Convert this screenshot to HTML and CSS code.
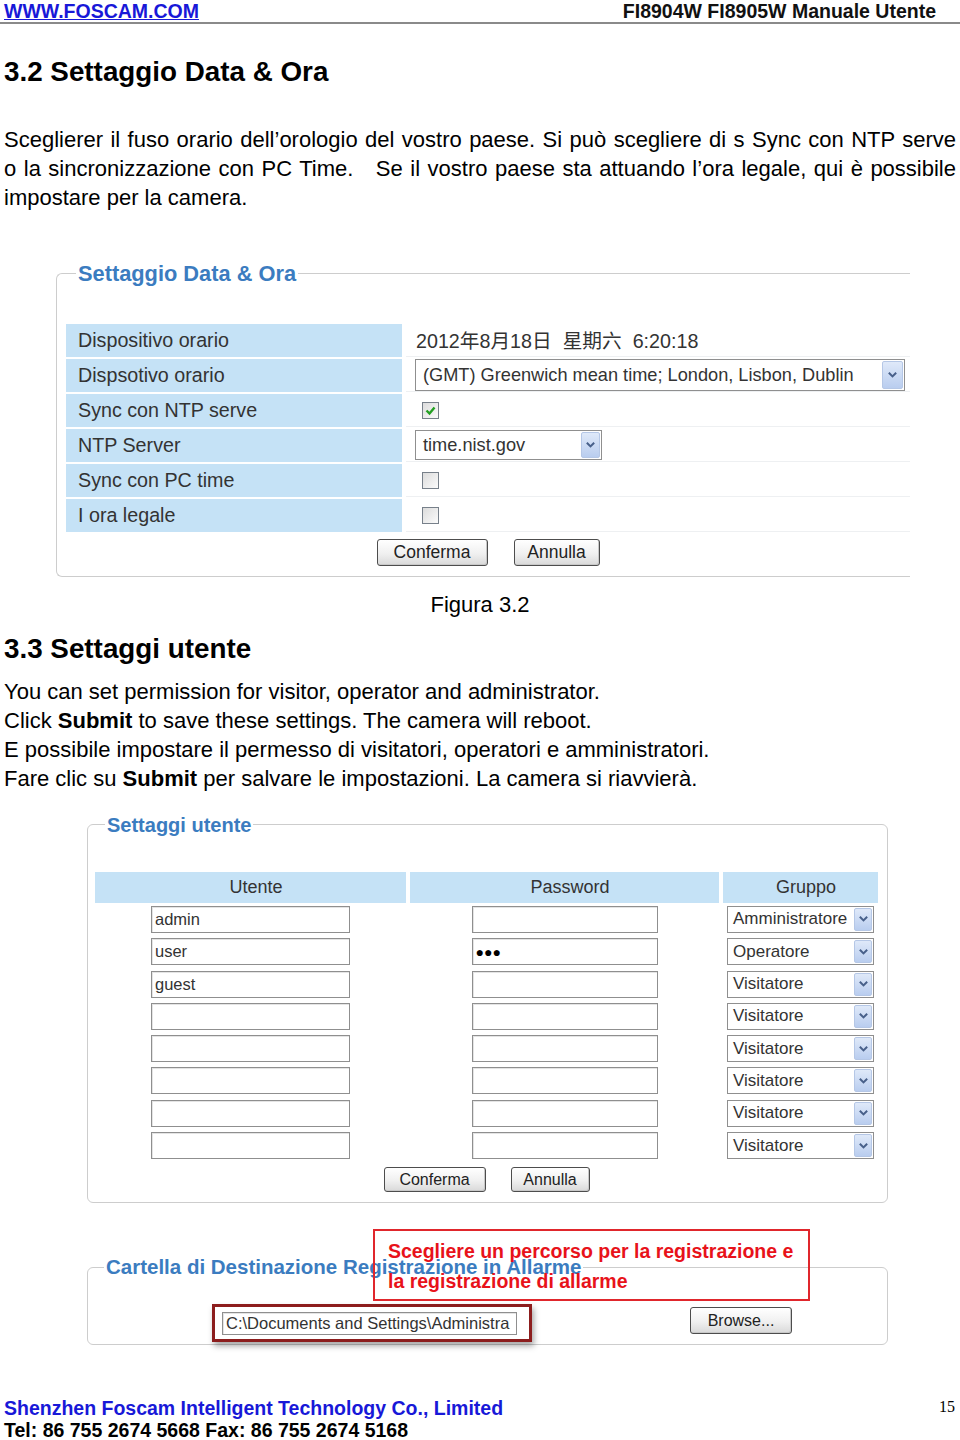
FILE: index.html
```html
<!DOCTYPE html>
<html lang="it">
<head>
<meta charset="utf-8">
<title>FI8904W FI8905W Manuale Utente</title>
<link rel="stylesheet" href="styles.css">
</head>
<body>
<header class="page-head">
  <a class="site" href="#">WWW.FOSCAM.COM</a>
  <span class="doc">FI8904W FI8905W Manuale Utente</span>
</header>
<main class="page">
  <h2 class="sec sec-1">3.2 Settaggio Data &amp; Ora</h2>
  <div class="para para-1">
    <span class="jl">Sceglierer il fuso orario dell’orologio del vostro paese. Si può scegliere di s Sync con NTP serve</span>
    <span class="jl">o la sincronizzazione con PC Time.&nbsp;&nbsp; Se il vostro paese sta attuando l’ora legale, qui è possibile</span>
    <span class="ln">impostare per la camera.</span>
  </div>

  <fieldset class="fs fs-date">
    <legend>Settaggio Data &amp; Ora</legend>
    <div class="dt-grid">
      <div class="lbl">Dispositivo orario</div>
      <div class="val"><span class="dt-text">2012年8月18日&nbsp; 星期六&nbsp; 6:20:18</span></div>
      <div class="lbl">Dispsotivo orario</div>
      <div class="val">
        <div class="sel sel-tz"><span class="sel-text">(GMT) Greenwich mean time; London, Lisbon, Dublin</span><span class="arrow"><svg viewBox="0 0 12 8"><path d="M2 1.5l4 4 4-4"/></svg></span></div>
      </div>
      <div class="lbl">Sync con NTP serve</div>
      <div class="val"><span class="chk"><svg viewBox="0 0 15 15"><path d="M3.5 7.5l3 3 5-6"/></svg></span></div>
      <div class="lbl">NTP Server</div>
      <div class="val">
        <div class="sel sel-ntp"><span class="sel-text">time.nist.gov</span><span class="arrow"><svg viewBox="0 0 12 8"><path d="M2 1.5l4 4 4-4"/></svg></span></div>
      </div>
      <div class="lbl">Sync con PC time</div>
      <div class="val"><span class="chk off"></span></div>
      <div class="lbl">I ora legale</div>
      <div class="val"><span class="chk off"></span></div>
    </div>
    <div class="btns btns-date"><span class="btn b-conf">Conferma</span><span class="btn b-ann">Annulla</span></div>
  </fieldset>

  <div class="caption">Figura 3.2</div>

  <h2 class="sec sec-2">3.3 Settaggi utente</h2>
  <div class="para para-2">
    <span class="ln">You can set permission for visitor, operator and administrator.</span>
    <span class="ln">Click <b>Submit</b> to save these settings. The camera will reboot.</span>
    <span class="ln">E possibile impostare il permesso di visitatori, operatori e amministratori.</span>
    <span class="ln">Fare clic su <b>Submit</b> per salvare le impostazioni. La camera si riavvierà.</span>
  </div>

  <fieldset class="fs fs-user">
    <legend>Settaggi utente</legend>
    <div class="u-head"><div>Utente</div><div>Password</div><div>Gruppo</div></div>
    <div class="u-body">
      <div class="cell"><span class="inp inp-user">admin</span></div>
      <div class="cell"><span class="inp inp-pass"></span></div>
      <div class="cell"><div class="sel sel-grp"><span class="sel-text">Amministratore</span><span class="arrow"><svg viewBox="0 0 12 8"><path d="M2 1.5l4 4 4-4"/></svg></span></div></div>

      <div class="cell"><span class="inp inp-user">user</span></div>
      <div class="cell"><span class="inp inp-pass"><span class="dots">●●●</span></span></div>
      <div class="cell"><div class="sel sel-grp"><span class="sel-text">Operatore</span><span class="arrow"><svg viewBox="0 0 12 8"><path d="M2 1.5l4 4 4-4"/></svg></span></div></div>

      <div class="cell"><span class="inp inp-user">guest</span></div>
      <div class="cell"><span class="inp inp-pass"></span></div>
      <div class="cell"><div class="sel sel-grp"><span class="sel-text">Visitatore</span><span class="arrow"><svg viewBox="0 0 12 8"><path d="M2 1.5l4 4 4-4"/></svg></span></div></div>

      <div class="cell"><span class="inp inp-user"></span></div>
      <div class="cell"><span class="inp inp-pass"></span></div>
      <div class="cell"><div class="sel sel-grp"><span class="sel-text">Visitatore</span><span class="arrow"><svg viewBox="0 0 12 8"><path d="M2 1.5l4 4 4-4"/></svg></span></div></div>

      <div class="cell"><span class="inp inp-user"></span></div>
      <div class="cell"><span class="inp inp-pass"></span></div>
      <div class="cell"><div class="sel sel-grp"><span class="sel-text">Visitatore</span><span class="arrow"><svg viewBox="0 0 12 8"><path d="M2 1.5l4 4 4-4"/></svg></span></div></div>

      <div class="cell"><span class="inp inp-user"></span></div>
      <div class="cell"><span class="inp inp-pass"></span></div>
      <div class="cell"><div class="sel sel-grp"><span class="sel-text">Visitatore</span><span class="arrow"><svg viewBox="0 0 12 8"><path d="M2 1.5l4 4 4-4"/></svg></span></div></div>

      <div class="cell"><span class="inp inp-user"></span></div>
      <div class="cell"><span class="inp inp-pass"></span></div>
      <div class="cell"><div class="sel sel-grp"><span class="sel-text">Visitatore</span><span class="arrow"><svg viewBox="0 0 12 8"><path d="M2 1.5l4 4 4-4"/></svg></span></div></div>

      <div class="cell"><span class="inp inp-user"></span></div>
      <div class="cell"><span class="inp inp-pass"></span></div>
      <div class="cell"><div class="sel sel-grp"><span class="sel-text">Visitatore</span><span class="arrow"><svg viewBox="0 0 12 8"><path d="M2 1.5l4 4 4-4"/></svg></span></div></div>
    </div>
    <div class="btns btns-user"><span class="btn b-conf">Conferma</span><span class="btn b-ann">Annulla</span></div>
  </fieldset>

  <div class="dest-wrap">
    <fieldset class="fs fs-dest">
      <legend>Cartella di Destinazione Registrazione in Allarme</legend>
      <div class="dest-row">
        <div class="hl"><span class="inp inp-path">C:\Documents and Settings\Administra</span></div>
        <span class="btn b-browse">Browse...</span>
      </div>
    </fieldset>
    <div class="note">Scegliere un percorso per la registrazione e<br>la registrazione di allarme</div>
  </div>
</main>
<footer class="page-foot">
  <div class="foot-left">
    <div class="company">Shenzhen Foscam Intelligent Technology Co., Limited</div>
    <div class="tel">Tel: 86 755 2674 5668 Fax: 86 755 2674 5168</div>
  </div>
  <div class="pageno">15</div>
</footer>
</body>
</html>
```
FILE: styles.css
```css
* { box-sizing: border-box; }
html, body {
  margin: 0;
  padding: 0;
  background: #fff;
  width: 960px;
  height: 1440px;
  overflow: hidden;
}
body {
  font-family: "Liberation Sans", Arial, "Noto Sans CJK SC", sans-serif;
  color: #000;
}

/* header */
.page-head {
  display: flex;
  justify-content: space-between;
  align-items: flex-start;
  height: 24px;
  padding: 0 24px 0 4px;
  border-bottom: 2px solid #8a8a8a;
  font-weight: bold;
  font-size: 19.5px;
  line-height: 22px;
}
.site { color: #1818d8; text-decoration: underline; }
.doc { color: #111; }

.page { padding: 0 4px; }

.sec {
  margin: 0;
  font-size: 27.8px;
  line-height: 32px;
  font-weight: bold;
}
.sec-1 { margin-top: 32px; }
.sec-2 { margin-top: 14.5px; }

.para { font-size: 22px; line-height: 29px; }
.para-1 { margin-top: 36.5px; }
.para-2 { margin-top: 11.5px; line-height: 29.3px; }
.jl { display: block; text-align: justify; text-align-last: justify; }
.ln { display: block; }

.caption {
  margin-top: 12.5px;
  text-align: center;
  font-size: 22px;
  line-height: 29px;
}

/* fieldsets */
.fs {
  margin: 0;
  min-width: 0;
  border: 1px solid #cdcdcd;
  border-radius: 6px;
}
.fs legend {
  padding: 0 2px;
  margin-left: 10px;
  font-weight: bold;
  color: #3b7cc0;
  line-height: 24px;
  font-size: 20px;
}

.fs-date {
  margin: 48.5px 0 0 52px;
  width: 854px;
  border-right: none;
  border-radius: 6px 0 0 6px;
  padding: 38px 0 10px 9px;
}
.fs-date legend { font-size: 21.8px; line-height: 24px; padding: 2px 2px 0; }

.dt-grid {
  display: grid;
  grid-template-columns: 336px 1fr;
  grid-auto-rows: 33px;
  gap: 2px 4px;
}
.lbl {
  background: #c5e2f6;
  color: #333;
  font-size: 19.7px;
  padding-left: 12px;
  display: flex;
  align-items: center;
}
.val {
  border-bottom: 1px solid #eef0f2;
  display: flex;
  align-items: center;
  padding-left: 9px;
  font-size: 19.7px;
  color: #333;
}
.dt-text { margin-left: 1px; margin-bottom: 2px; }

/* select */
.sel {
  display: flex;
  align-items: center;
  justify-content: space-between;
  border: 1px solid #8f8f8f;
  background: #fff;
  color: #333;
  padding: 0 1px 0 7px;
  white-space: nowrap;
}
.arrow {
  display: flex;
  align-items: center;
  justify-content: center;
  background: linear-gradient(#dfe9f9, #b9cdef);
  border: 1px solid #b5c7e6;
  border-radius: 2px;
}
.arrow svg { width: 11px; height: 8px; }
.arrow path { fill: none; stroke: #48608a; stroke-width: 2.2; }

.sel-tz { width: 490px; height: 32px; font-size: 18.2px; }
.sel-tz .arrow { width: 21px; height: 28px; }
.sel-ntp { width: 187px; height: 30px; font-size: 18.2px; }
.sel-ntp .arrow { width: 19px; height: 26px; }

/* checkbox */
.chk {
  width: 17px;
  height: 17px;
  margin-left: 7px;
  border: 1px solid #77808a;
  background: linear-gradient(135deg, #dcdcdc, #fbfbfb);
  display: flex;
  align-items: center;
  justify-content: center;
}
.chk svg { width: 15px; height: 15px; }
.chk path { fill: none; stroke: #23a023; stroke-width: 2.4; }

/* buttons */
.btns {
  display: flex;
  justify-content: center;
}
.btn {
  display: flex;
  align-items: center;
  justify-content: center;
  border: 1px solid #4d4d4d;
  border-radius: 3px;
  background: linear-gradient(#ffffff, #f0f0f0 55%, #d9d9d9);
  color: #222;
  box-shadow: inset -1px -1px 0 #c8c8c8;
}
.btns-date { margin-top: 7px; gap: 26px; }
.btns-date .btn { height: 27px; font-size: 17.5px; }
.btns-date .b-conf { width: 111px; }
.btns-date .b-ann { width: 86px; }

/* users */
.fs-user {
  margin: 19.3px 0 0 83px;
  width: 801px;
  padding: 35px 9px 10px 7px;
}
.u-head, .u-body {
  display: grid;
  grid-template-columns: 311px 309px 155px;
  column-gap: 4px;
}
.u-head div {
  height: 31px;
  background: #c5e2f6;
  color: #333;
  font-size: 18px;
  display: flex;
  align-items: center;
  justify-content: center;
  padding-left: 11px;
}
.u-body {
  margin-top: 3px;
  grid-auto-rows: 27px;
  row-gap: 5.3px;
}
.cell { display: flex; justify-content: center; }
.inp {
  display: flex;
  align-items: center;
  height: 27px;
  border: 1px solid #8f8f8f;
  box-shadow: inset 1px 1px 0 #e4e4e4;
  background: #fff;
  color: #333;
  font-size: 16.5px;
  padding-left: 3px;
  white-space: nowrap;
  overflow: hidden;
}
.inp-user { width: 199px; }
.inp-pass { width: 186px; }
.dots { font-size: 14px; letter-spacing: 0; color: #000; }
.sel-grp { width: 147px; height: 27px; font-size: 17px; padding-left: 5px; }
.sel-grp .arrow { width: 18px; height: 23px; }

.btns-user { margin-top: 8px; gap: 25px; }
.btns-user .btn { height: 25px; font-size: 16px; }
.btns-user .b-conf { width: 102px; }
.btns-user .b-ann { width: 79px; }

/* destination */
.dest-wrap {
  position: relative;
  margin: 52px 0 0 83px;
  width: 801px;
}
.fs-dest {
  width: 801px;
  padding: 25px 0 2px 0;
}
.fs-dest legend { margin-left: 16px; font-size: 20.5px; }
.dest-row { display: flex; align-items: flex-start; }
.hl {
  margin-left: 124px;
  width: 320px;
  height: 38px;
  border: 3px solid #8c1d1d;
  box-shadow: 2px 4px 6px rgba(0, 0, 0, 0.35);
  display: flex;
  align-items: center;
  padding-left: 7px;
}
.inp-path { width: 295px; height: 23px; font-size: 16.5px; padding-left: 3px; }
.b-browse {
  margin-left: 158px;
  margin-top: 3px;
  width: 102px;
  height: 27px;
  font-size: 16px;
}
.note {
  position: absolute;
  top: -26px;
  left: 286px;
  width: 437px;
  height: 72px;
  border: 2px solid #e0262c;
  padding: 5px 0 0 13px;
  color: #e8121a;
  font-weight: bold;
  font-size: 19.5px;
  line-height: 30px;
}

/* footer */
.page-foot {
  margin-top: 52px;
  display: flex;
  justify-content: space-between;
  padding: 0 5px 0 4px;
  font-weight: bold;
  font-size: 19.5px;
  line-height: 22px;
}
.company { color: #1818d8; }
.tel { color: #000; }
.pageno {
  font-family: "Liberation Serif", "Times New Roman", serif;
  font-weight: normal;
  font-size: 16px;
  line-height: 20px;
}
```
